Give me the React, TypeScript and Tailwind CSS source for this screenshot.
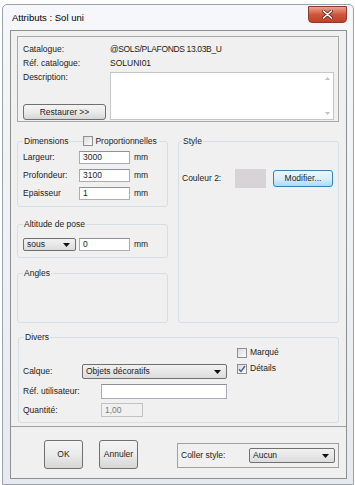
import React from "react";

const btn =
  "border border-[#707070] rounded-[3px] bg-gradient-to-b from-[#f4f4f4] via-[#ebebeb] to-[#d6d6d6] flex items-center justify-center";
const field = "bg-white border border-[#abadb3] border-t-[#8e9199] px-[3px] flex items-center";
const combo =
  "border border-[#707070] rounded-[2px] bg-gradient-to-b from-[#f2f2f2] to-[#dcdcdc] flex items-center justify-between pl-[3px] pr-[5px]";

function Arrow() {
  return (
    <svg width="7" height="4" viewBox="0 0 7 4">
      <path d="M0 0h7L3.5 4z" fill="#111" />
    </svg>
  );
}

function Check({ checked }: { checked?: boolean }) {
  return (
    <div className="w-[10px] h-[10px] border border-[#8e8f8f] bg-gradient-to-br from-[#dcdcdc] to-[#fbfbfb] flex items-center justify-center">
      {checked && (
        <svg width="8" height="8" viewBox="0 0 8 8">
          <path d="M1 4.2l2 2.2L7 1" stroke="#3f5fa8" strokeWidth="1.4" fill="none" />
        </svg>
      )}
    </div>
  );
}

function Group({ title, className, children }: { title: React.ReactNode; className: string; children?: React.ReactNode }) {
  return (
    <div className={"border border-[#d5dfe5] rounded-[3px] " + className}>
      <div className="-mt-[6px] ml-[5px] h-[10px] leading-[10px] flex items-center">{title}</div>
      {children}
    </div>
  );
}

export default function App() {
  return (
    <div className="w-[355px] h-[485px] bg-white overflow-hidden font-['Liberation_Sans',Arial,sans-serif] text-[8.5px] text-[#1b1b1b]">
      <div className="mt-[4px] ml-[2px] w-[352px] h-[481px] border border-[#9aa3ad] rounded-t-[5px] bg-gradient-to-b from-[#f5f7fa] to-[#e6eaef] flex flex-col">
        {/* title bar */}
        <div className="h-[25px] flex justify-between pl-[9px] pr-[6px]">
          <span className="mt-[7px] text-[9.5px] leading-[12px] text-black">Attributs : Sol uni</span>
          <div className="mt-[1px] w-[39px] h-[17px] rounded-b-[4px] border border-[#8d3a2b] bg-gradient-to-b from-[#e8a493] via-[#d0553c] to-[#c2402a] flex items-center justify-center">
            <svg width="11" height="9" viewBox="0 0 11 9">
              <path d="M1.5 1l8 7M9.5 1l-8 7" stroke="#5a2a22" strokeWidth="3" strokeLinecap="round" />
              <path d="M1.5 1l8 7M9.5 1l-8 7" stroke="#fff" strokeWidth="1.6" strokeLinecap="round" />
            </svg>
          </div>
        </div>

        {/* client */}
        <div className="ml-[7px] w-[337px] h-[449px] border border-[#8e8f8f] bg-[#f0f0f0] flex flex-col">
          <div className="h-[396px] border-b border-[#a0a0a0] flex flex-col">
            {/* catalogue panel */}
            <div className="mt-[5px] ml-[6px] w-[322px] h-[86px] border border-[#a9a9a9] pl-[5px] pt-[5px] pr-[3px] flex flex-col">
              <div className="h-[14px] flex items-center">
                <span className="w-[87px]">Catalogue:</span>
                <span className="tracking-[-0.35px]">@SOLS/PLAFONDS 13.03B_U</span>
              </div>
              <div className="h-[14px] flex items-center">
                <span className="w-[87px]">Réf. catalogue:</span>
                <span>SOLUNI01</span>
              </div>
              <div className="mt-[2px] flex">
                <div className="w-[87px] h-[48px] flex flex-col justify-between">
                  <span className="leading-[10px] mt-[0px]">Description:</span>
                  <div className={btn + " w-[83px] h-[16px]"}>Restaurer &gt;&gt;</div>
                </div>
                <div className="w-[224px] h-[48px] bg-white border border-[#c7c7c7] flex justify-end">
                  <div className="w-[11px] flex flex-col justify-between items-center py-[4px]">
                    <svg width="5" height="3" viewBox="0 0 5 3">
                      <path d="M0 3h5L2.5 0z" fill="#c4c4c4" />
                    </svg>
                    <svg width="5" height="3" viewBox="0 0 5 3">
                      <path d="M0 0h5L2.5 3z" fill="#c4c4c4" />
                    </svg>
                  </div>
                </div>
              </div>
            </div>

            {/* middle */}
            <div className="mt-[19px] ml-[6px] flex">
              <div className="w-[151px] flex flex-col">
                <Group
                  className="h-[66px]"
                  title={
                    <>
                      <span className="bg-[#f0f0f0] px-[1px]">Dimensions</span>
                      <span className="ml-[14px] bg-[#f0f0f0] flex items-center gap-[2px] pr-[2px]">
                        <Check />
                        Proportionnelles
                      </span>
                    </>
                  }
                >
                  <div className="mt-[5px] pl-[5px] flex flex-col gap-[5px]">
                    {[
                      ["Largeur:", "3000"],
                      ["Profondeur:", "3100"],
                      ["Epaisseur", "1"],
                    ].map(([l, v]) => (
                      <div key={l} className="h-[13px] flex items-center">
                        <span className="w-[56px]">{l}</span>
                        <div className={field + " w-[51px] h-[13px]"}>{v}</div>
                        <span className="ml-[4px]">mm</span>
                      </div>
                    ))}
                  </div>
                </Group>

                <Group className="mt-[17px] h-[34px]" title={<span className="bg-[#f0f0f0] px-[1px]">Altitude de pose</span>}>
                  <div className="mt-[9px] pl-[5px] h-[13px] flex items-center">
                    <div className={combo + " w-[53px] h-[13px]"}>
                      <span>sous</span>
                      <Arrow />
                    </div>
                    <div className={field + " ml-[3px] w-[51px] h-[13px]"}>0</div>
                    <span className="ml-[4px]">mm</span>
                  </div>
                </Group>

                <Group className="mt-[15px] h-[50px]" title={<span className="bg-[#f0f0f0] px-[1px]">Angles</span>} />
              </div>

              <Group className="ml-[10px] w-[161px] h-[182px]" title={<span className="bg-[#f0f0f0] px-[1px] -ml-[2px]">Style</span>}>
                <div className="mt-[23px] pl-[3px] flex items-center">
                  <span className="w-[53px]">Couleur 2:</span>
                  <div className="w-[31px] h-[19px] bg-[#d7d3d7]" />
                  <div className="ml-[7px] w-[60px] h-[17px] rounded-[3px] border border-[#3c7fb1] bg-gradient-to-b from-[#eaf6fd] via-[#d9f0fc] to-[#a9dbf6] flex items-center justify-center">
                    Modifier...
                  </div>
                </div>
              </Group>
            </div>

            {/* divers */}
            <Group className="mt-[14px] ml-[7px] w-[321px] h-[86px]" title={<span className="bg-[#f0f0f0] px-[1px]">Divers</span>}>
              <div className="flex">
                <div className="mt-[22px] pl-[4px] w-[213px] flex flex-col">
                  <div className="h-[15px] flex items-center">
                    <span className="w-[59px]">Calque:</span>
                    <div className={combo + " w-[145px] h-[15px]"}>
                      <span>Objets décoratifs</span>
                      <Arrow />
                    </div>
                  </div>
                  <div className="mt-[5px] h-[15px] flex items-center">
                    <span className="w-[78px]">Réf. utilisateur:</span>
                    <div className={field + " w-[126px] h-[15px]"} />
                  </div>
                  <div className="mt-[4px] h-[14px] flex items-center">
                    <span className="w-[78px]">Quantité:</span>
                    <div className="w-[42px] h-[14px] border border-[#c2c2c2] bg-[#f0f0f0] px-[3px] flex items-center text-[#7a7a7a]">
                      1,00
                    </div>
                  </div>
                </div>
                <div className="mt-[5px] ml-[5px] flex flex-col gap-[5px]">
                  <div className="h-[11px] flex items-center gap-[3px]">
                    <Check />
                    Marqué
                  </div>
                  <div className="h-[11px] flex items-center gap-[3px]">
                    <Check checked />
                    Détails
                  </div>
                </div>
              </div>
            </Group>
          </div>

          {/* buttons */}
          <div className="flex items-start">
            <div className={btn + " ml-[33px] mt-[13px] w-[39px] h-[29px]"}>OK</div>
            <div className={btn + " ml-[16px] mt-[13px] w-[39px] h-[29px]"}>Annuler</div>
            <div className="ml-[39px] mt-[16px] w-[162px] h-[25px] border border-[#a0a0a0] flex items-center pl-[3px]">
              <span className="w-[68px]">Coller style:</span>
              <div className={combo + " w-[86px] h-[15px]"}>
                <span>Aucun</span>
                <Arrow />
              </div>
            </div>
          </div>
        </div>
      </div>
    </div>
  );
}
